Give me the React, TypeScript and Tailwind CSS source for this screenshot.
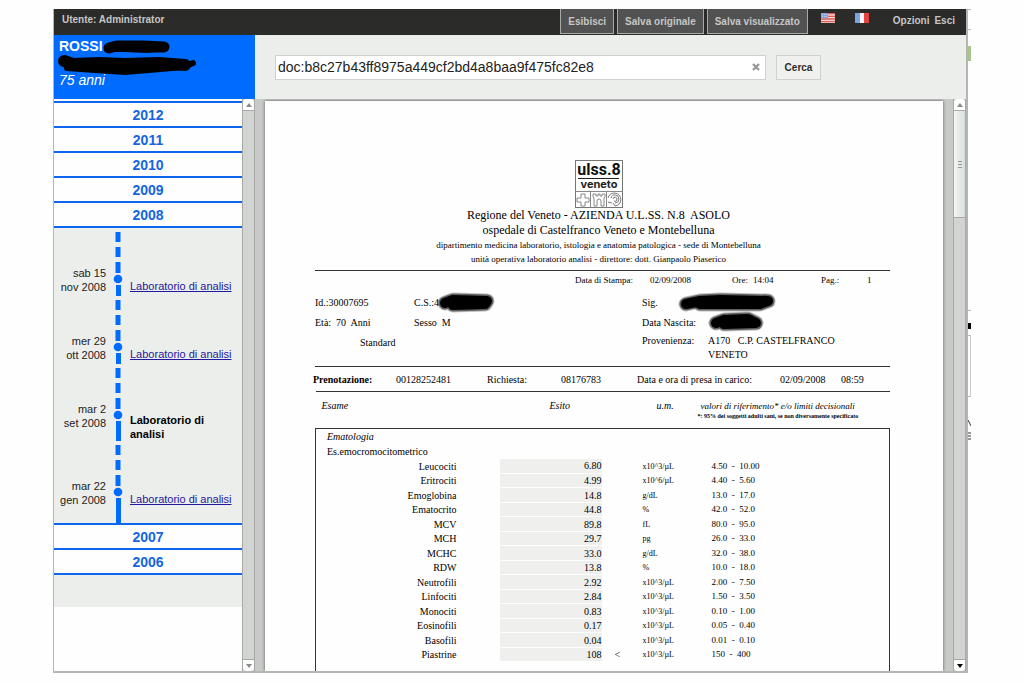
import type { ReactNode } from "react";
import clsx from "clsx";

const yearsBefore = ["2012", "2011", "2010", "2009", "2008"];
const yearsAfter = ["2007", "2006"];

const events = [
  { day: "sab 15", month: "nov 2008", active: false },
  { day: "mer 29", month: "ott 2008", active: false },
  { day: "mar 2", month: "set 2008", active: true },
  { day: "mar 22", month: "gen 2008", active: false },
];

const results = [
  { name: "Leucociti", value: "6.80", unit: "x10^3/µL", range: "4.50  -  10.00" },
  { name: "Eritrociti", value: "4.99", unit: "x10^6/µL", range: "4.40  -  5.60" },
  { name: "Emoglobina", value: "14.8", unit: "g/dL", range: "13.0  -  17.0" },
  { name: "Ematocrito", value: "44.8", unit: "%", range: "42.0  -  52.0" },
  { name: "MCV", value: "89.8", unit: "fL", range: "80.0  -  95.0" },
  { name: "MCH", value: "29.7", unit: "pg", range: "26.0  -  33.0" },
  { name: "MCHC", value: "33.0", unit: "g/dL", range: "32.0  -  38.0" },
  { name: "RDW", value: "13.8", unit: "%", range: "10.0  -  18.0" },
  { name: "Neutrofili", value: "2.92", unit: "x10^3/µL", range: "2.00  -  7.50" },
  { name: "Linfociti", value: "2.84", unit: "x10^3/µL", range: "1.50  -  3.50" },
  { name: "Monociti", value: "0.83", unit: "x10^3/µL", range: "0.10  -  1.00" },
  { name: "Eosinofili", value: "0.17", unit: "x10^3/µL", range: "0.05  -  0.40" },
  { name: "Basofili", value: "0.04", unit: "x10^3/µL", range: "0.01  -  0.10" },
  { name: "Piastrine", value: "108", flag: "<", unit: "x10^3/µL", range: "150  -  400" },
];

const HeaderButton = ({ children }: { children: ReactNode }) => (
  <button className="h-[25px] border border-t-0 border-[#a9a9a9] bg-[#525252] px-[7px] text-[#c6c6c6]">
    {children}
  </button>
);

const UsFlag = () => (
  <svg width="14" height="10" viewBox="0 0 14 10">
    <rect width="14" height="10" fill="#f3d5d3" />
    <path d="M0 .7h14M0 3.3h14M0 6h14M0 8.7h14" stroke="#dc5b58" strokeWidth="1.3" />
    <rect width="7" height="5" fill="#7fa6dc" />
    <path d="M1 1.5h5M1 3.5h5" stroke="#c9dcf4" strokeWidth=".8" strokeDasharray="1 1" />
  </svg>
);

const FrFlag = () => (
  <svg width="14" height="10" viewBox="0 0 14 10">
    <rect width="14" height="10" fill="#f6f6fa" />
    <rect width="5" height="10" fill="#7ba4e2" />
    <rect x="9" width="5" height="10" fill="#e5433f" />
  </svg>
);

const Header = () => (
  <header className="flex h-[26px] justify-between bg-[#2b2b2a] pl-2 pr-[11px] text-[10px] font-bold text-[#c6c6c6]">
    <span className="pt-[3px]">Utente: Administrator</span>
    <div className="flex">
      <div className="flex gap-[3px]">
        <HeaderButton>Esibisci</HeaderButton>
        <HeaderButton>Salva originale</HeaderButton>
        <HeaderButton>Salva visualizzato</HeaderButton>
      </div>
      <div className="flex items-start gap-5 pl-[13px] pr-6 pt-1">
        <button aria-label="English">
          <UsFlag />
        </button>
        <button aria-label="Français">
          <FrFlag />
        </button>
      </div>
      <nav className="flex gap-[5px] pt-1">
        <a href="#opzioni">Opzioni</a>
        <a href="#esci">Esci</a>
      </nav>
    </div>
  </header>
);

const Patient = () => (
  <div className="h-16 bg-[#006cff] px-[5px] pt-[3px] text-[14px] leading-[17px] text-white">
    <div className="flex items-center">
      <strong>ROSSI</strong>
      <svg width="68" height="17" viewBox="0 0 68 17" className="overflow-visible">
        <path d="M6 10 14 8 40 8 61 9" stroke="#000" strokeWidth="11" strokeLinecap="round" fill="none" />
        <path d="M3 12 22 12 44 13 60 12" stroke="#000" strokeWidth="4" strokeLinecap="round" fill="none" />
      </svg>
    </div>
    <svg width="140" height="17" viewBox="0 0 140 17" className="block overflow-visible">
      <path d="M5 6 14 9 40 8 66 9 100 8 126 10" stroke="#000" strokeWidth="12" strokeLinecap="round" fill="none" />
      <path d="M8 13 36 15 66 17 90 15 124 12 134 8" stroke="#000" strokeWidth="6" strokeLinecap="round" fill="none" />
    </svg>
    <em>75 anni</em>
  </div>
);

const Year = ({ year }: { year: string }) => (
  <button className="block h-[25px] w-full border-b-2 border-[#0f66ee] bg-[#fefefe] text-center text-[14px] font-bold leading-[20px] text-[#1565e0]">
    {year}
  </button>
);

const TimelineEvent = ({ day, month, active }: (typeof events)[number]) => (
  <li className="flex last:h-[82px]">
    <div className="w-[52px] pb-[2px] pt-[38px] text-right">
      {day}
      <br />
      {month}
    </div>
    <div className="ml-[6px] flex w-3 flex-col items-center">
      <svg width="12" height="57" viewBox="0 0 12 57" className="shrink-0">
        <path d="M6 4v10M6 19v10M6 34v11" stroke="#006cff" strokeWidth="5" />
        <circle cx="6" cy="51" r="4.3" fill="#006cff" />
      </svg>
      <div className="w-[5px] flex-1 bg-[#006cff]" />
    </div>
    {active ? (
      <strong className="flex-1 pl-[6px] pr-6 pt-[49px] text-black">Laboratorio di analisi</strong>
    ) : (
      <a href="#analisi" className="flex-1 whitespace-nowrap pl-[6px] pt-[51px] text-[#2418a0] underline">
        Laboratorio di analisi
      </a>
    )}
  </li>
);

const Arrow = ({ down }: { down?: boolean }) => (
  <svg width="6" height="4" viewBox="0 0 6 4">
    <path d={down ? "M0 0h6L3 4z" : "M0 4h6L3 0z"} fill="currentColor" />
  </svg>
);

const Scrollbar = ({ thumb }: { thumb?: boolean }) => (
  <div className="flex w-[13px] shrink-0 flex-col border-x border-[#a8aaa8] bg-[#d2d4d2]">
    <button aria-label="Su" className="flex h-3 items-center justify-center rounded-t-sm border-b border-[#a8aaa8] bg-white text-[#8a8a8a]">
      <Arrow />
    </button>
    {thumb && (
      <div className="flex h-[107px] flex-col items-center justify-center gap-[2px] border-b border-[#a8aaa8] bg-linear-to-r from-[#f4f6f5] to-[#d9dedc]">
        <i className="h-px w-1 bg-[#999]" />
        <i className="h-px w-1 bg-[#999]" />
        <i className="h-px w-1 bg-[#999]" />
      </div>
    )}
    <button
      aria-label="Giù"
      className={clsx(
        "mt-auto flex h-3 items-center justify-center rounded-b-sm border-t border-[#a8aaa8] bg-white",
        thumb ? "text-black" : "text-[#8a8a8a]"
      )}
    >
      <Arrow down />
    </button>
  </div>
);

const Sidebar = () => (
  <aside className="flex w-[201px] shrink-0 flex-col">
    <Patient />
    <div className="flex min-h-0 flex-1">
      <div className="flex-1 overflow-hidden pt-[2px]">
        <div className="border-t-2 border-[#0f66ee] bg-[#eceeeb] pb-8">
          {yearsBefore.map((year) => (
            <Year key={year} year={year} />
          ))}
          <ul className="text-[11px] leading-[14px] text-[#222]">
            {events.map((event) => (
              <TimelineEvent key={event.month} {...event} />
            ))}
          </ul>
          <div className="border-t-2 border-[#0f66ee]">
            {yearsAfter.map((year) => (
              <Year key={year} year={year} />
            ))}
          </div>
        </div>
      </div>
      <Scrollbar />
    </div>
  </aside>
);

const SearchBar = () => (
  <form className="flex h-16 shrink-0 items-center gap-[10px] bg-[#eceeeb] pl-5" onSubmit={(e) => e.preventDefault()}>
    <div className="flex h-[25px] w-[71%] items-center border border-[#cfd1cf] bg-white pr-[5px]">
      <input
        aria-label="Cerca documento"
        defaultValue="doc:b8c27b43ff8975a449cf2bd4a8baa9f475fc82e8"
        className="min-w-0 flex-1 px-[2px] text-[14px] text-[#222] outline-none"
      />
      <button type="button" aria-label="Cancella" className="text-[#999]">
        <svg width="8" height="8" viewBox="0 0 8 8">
          <path d="M1 1l6 6M7 1 1 7" stroke="currentColor" strokeWidth="2.4" />
        </svg>
      </button>
    </div>
    <button className="h-[25px] border border-[#cfd1cf] bg-[#f0f1ef] px-2 text-[10px] font-bold text-[#2b2b2b]">
      Cerca
    </button>
  </form>
);

const Logo = () => (
  <svg width="48" height="48" viewBox="0 0 48 48" className="mx-auto block">
    <rect x=".5" y=".5" width="47" height="47" fill="#fff" stroke="#777" />
    <text x="24" y="15" textAnchor="middle" fontFamily="Roboto, sans-serif" fontWeight="700" fontSize="16" fill="#111">
      ulss.8
    </text>
    <path d="M3 18.5h41" stroke="#222" strokeWidth="1.2" />
    <text x="24" y="28" textAnchor="middle" fontFamily="Inter, sans-serif" fontWeight="700" fontSize="11" fill="#222">
      veneto
    </text>
    <path d="M0 31.5h48M15.5 32v16M31.5 32v16" stroke="#888" />
    <path d="M6 34h4v4h4v4h-4v4H6v-4H2v-4h4z" fill="none" stroke="#888" />
    <path d="M18 34h3v2h2v-2h2v2h2v-2h3v3l-1 1v8h-3v-5a2 2 0 0 0-4 0v5h-3v-8l-1-1z" fill="none" stroke="#888" />
    <path d="M33 38a6.5 6.5 0 1 1 7 8M36 38a4 4 0 1 1 4 5M38 39a2 2 0 1 1 1 2M33 42l4 1M40 46l-2-3" fill="none" stroke="#777" />
  </svg>
);

const Scribble = ({ width, d }: { width: number; d: string }) => (
  <svg
    width={width}
    height="16"
    viewBox={`0 0 ${width} 16`}
    className="shrink-0 overflow-visible"
    stroke="#000"
    strokeLinecap="round"
    strokeLinejoin="round"
    fill="none"
  >
    <path d={d} strokeOpacity=".25" strokeWidth="15" />
    <path d={d} strokeOpacity=".5" strokeWidth="13" />
    <path d={d} strokeWidth="10" />
  </svg>
);

const Report = () => (
  <article className="h-full overflow-hidden bg-[#fefefe] pl-[50px] pr-[53px] pt-[59px] font-['Liberation_Serif',serif] text-[10px] leading-[14px] text-black shadow-[0_0_3px_#555]">
    <div className="pb-1 pr-2 text-center text-[9px]">
      <Logo />
      <h1 className="whitespace-pre text-[12px] leading-[15px]">Regione del Veneto - AZIENDA U.L.SS. N.8  ASOLO</h1>
      <h2 className="text-[12px] leading-[15px]">ospedale di Castelfranco Veneto e Montebelluna</h2>
      <p>dipartimento medicina laboratorio, istologia e anatomia patologica - sede di Montebelluna</p>
      <p>unità operativa laboratorio analisi - direttore: dott. Gianpaolo Piaserico</p>
    </div>

    <div className="border-y border-[#333] pb-1">
      <div className="grid grid-cols-[75px_82px_21px_68px_46px_1fr] pl-[260px] pt-[2px] text-[9px]">
        <span>Data di Stampa:</span>
        <span>02/09/2008</span>
        <span>Ore:</span>
        <span>14:04</span>
        <span>Pag.:</span>
        <span>1</span>
      </div>
      <div className="grid grid-cols-[327px_1fr] pt-[9px]">
        <div className="grid grid-cols-[99px_1fr] content-start gap-y-[6px]">
          <span>Id.:30007695</span>
          <span className="flex h-[14px] items-center">
            C.S.:4
            <Scribble width={56} d="M6 8 14 5 48 6 46 9 14 10" />
          </span>
          <span className="whitespace-pre">Età:  70  Anni</span>
          <span className="whitespace-pre">Sesso  M</span>
          <span className="pl-[45px]">Standard</span>
        </div>
        <div className="grid grid-cols-[66px_1fr] content-start">
          <span>Sig.</span>
          <span className="-ml-7 flex h-[14px] items-center">
            <Scribble width={96} d="M6 9 20 6 40 5 88 6 80 9 20 9" />
          </span>
          <span className="pb-1 pt-[6px]">Data Nascita:</span>
          <span className="flex h-6 items-center">
            <Scribble width={56} d="M8 9 16 6 40 5 48 9 16 10" />
          </span>
          <span>Provenienza:</span>
          <span className="whitespace-pre">
            A170   C.P. CASTELFRANCO
            <br />
            VENETO
          </span>
        </div>
      </div>
    </div>

    <div className="-ml-[2px] grid grid-cols-[83px_91px_74px_76px_143px_61px_1fr] pb-1 pt-[6px]">
      <strong>Prenotazione:</strong>
      <strong className="font-medium">00128252481</strong>
      <span>Richiesta:</span>
      <span>08176783</span>
      <span>Data e ora di presa in carico:</span>
      <span>02/09/2008</span>
      <span>08:59</span>
    </div>

    <table className="w-full table-fixed border-collapse border-t border-[#333] text-left">
      <colgroup>
        <col className="w-[184px]" />
        <col className="w-[102px]" />
        <col className="w-[41px]" />
        <col className="w-[69px]" />
        <col />
      </colgroup>
      <thead>
        <tr className="h-[37px] align-top italic">
          <th className="pl-[6px] pt-[7px] font-normal">Esame</th>
          <th className="pl-[50px] pt-[7px] font-normal">Esito</th>
          <th />
          <th className="pl-[14px] pt-[7px] font-normal">u.m.</th>
          <th className="whitespace-nowrap pt-[7px] text-[9px] font-normal">
            <span className="-ml-[11px]">valori di riferimento* e/o limiti decisionali</span>
            <small className="-ml-[14px] block text-[6px] font-bold not-italic leading-[7px]">
              *: 95% dei soggetti adulti sani, se non diversamente specificato
            </small>
          </th>
        </tr>
      </thead>
      <tbody className="border border-[#333]">
        <tr className="h-4">
          <td colSpan={5} className="pl-[11px] italic">Ematologia</td>
        </tr>
        <tr className="h-[14px]">
          <td colSpan={5} className="pl-[11px]">Es.emocromocitometrico</td>
        </tr>
        {results.map(({ name, value, flag, unit, range }) => (
          <tr key={name} className="odd:h-[15px] even:h-[14px]">
            <td className="pr-[43px] text-right leading-[13px]">{name}</td>
            <td className="border-b border-[#fefefe] bg-[#eff0ee] text-right leading-[13px]">{value}</td>
            <td className="pl-[13px] leading-[13px]">{flag}</td>
            <td className="text-[8px] leading-[13px]">{unit}</td>
            <td className="whitespace-pre text-[9px] leading-[13px]">{range}</td>
          </tr>
        ))}
        <tr className="h-20">
          <td colSpan={5} />
        </tr>
      </tbody>
    </table>
  </article>
);

// slivers of the window that lies behind, seen past the right edge
const BackWindow = () => (
  <svg width="3" height="664" className="shrink-0">
    <path d="M0 .5h3M0 20.5h3M0 301.5h3M0 326.5h3M0 387.5h3" stroke="#bbb" />
    <rect y="37" width="3" height="15" fill="#a9c58c" />
    <rect y="314" width="3" height="6" fill="#000" />
    <path d="M2.5 327v60" stroke="#ccc" />
    <path d="M0 411l3 6M0 424h3M0 427h3M0 430h3" stroke="#333" />
  </svg>
);

const App = () => {
  return (
    <div className="flex h-screen bg-[#fefefe] pb-[10px] pl-[53px] pr-[53px] pt-[9px] font-['Liberation_Sans',sans-serif]">
      <div className="flex min-w-0 flex-1 flex-col border-b-2 border-l border-r-2 border-[#b4b6b4]">
        <Header />
        <div className="flex min-h-0 flex-1">
          <Sidebar />
          <main className="flex min-w-0 flex-1 flex-col">
            <SearchBar />
            <div className="flex min-h-0 flex-1 bg-[#c8cac8]">
              <div className="min-w-0 flex-1 overflow-hidden pl-[10px] pr-[10px] pt-[2px]">
                <Report />
              </div>
              <Scrollbar thumb />
            </div>
          </main>
        </div>
      </div>
      <BackWindow />
    </div>
  );
};

export default App;
